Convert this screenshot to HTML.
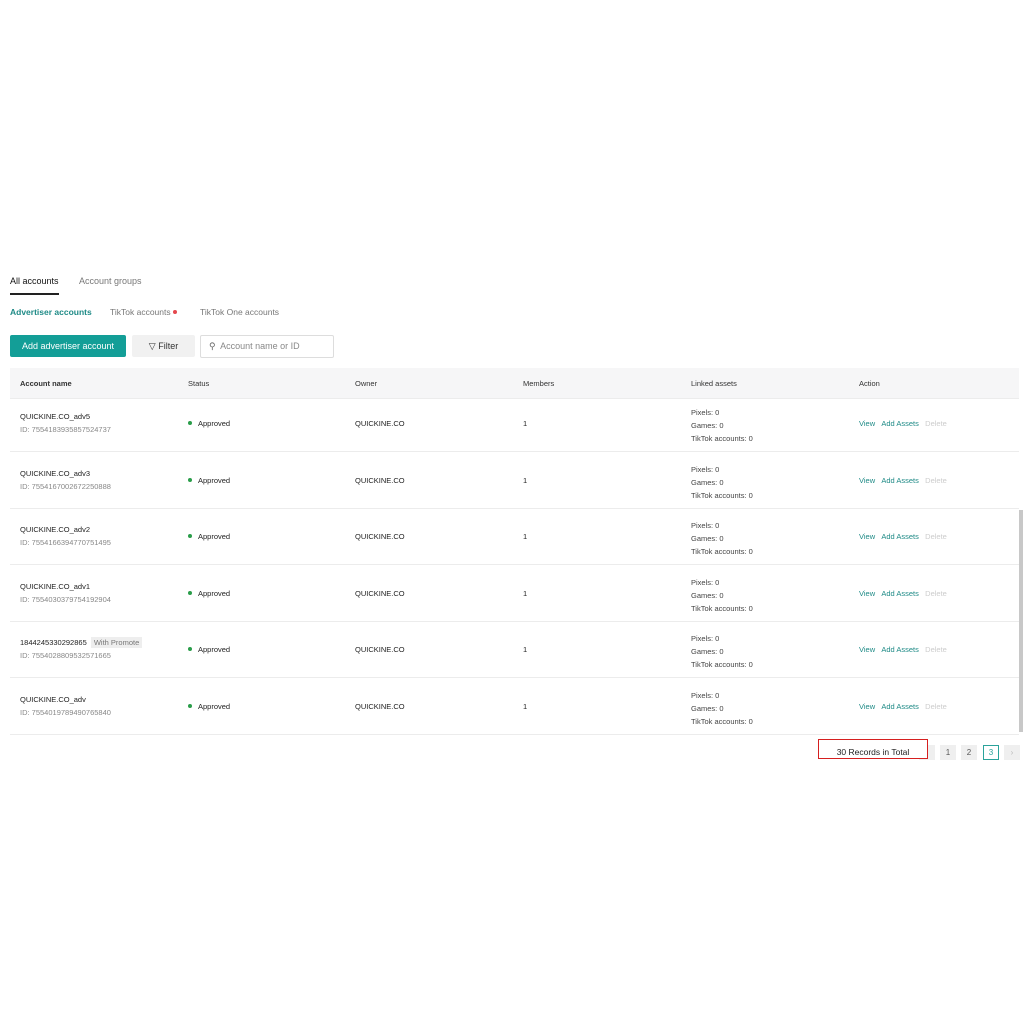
<!DOCTYPE html><html><head><style>
body{margin:0;width:1024px;height:1024px;background:#fff;font-family:"Liberation Sans",sans-serif;color:#222;position:relative;overflow:hidden}
.a{position:absolute;white-space:nowrap}
.s{font-size:7.5px}
.ln{position:absolute;left:10px;width:1009px;height:1px;background:#ececec}
.g{color:#888}
.dot{display:inline-block;width:4px;height:4px;border-radius:50%;background:#2a9d4a;margin-right:6px;vertical-align:1px}
.pb{position:absolute;top:745px;width:16px;height:15px;background:#efefef;font-size:8px;text-align:center;line-height:15px;color:#555}
</style></head><body>
<div class="a" style="left:10px;top:276px;font-size:9px;color:#111">All accounts</div>
<div style="position:absolute;left:10px;top:293px;width:49px;height:2px;background:#222"></div>
<div class="a" style="left:79px;top:276px;font-size:9px;color:#777">Account groups</div>
<div class="a" style="left:10px;top:307px;font-size:8.5px;color:#1e8a86;font-weight:bold">Advertiser accounts</div>
<div class="a" style="left:110px;top:307px;font-size:8.5px;color:#777">TikTok accounts <span style="display:inline-block;width:4px;height:4px;border-radius:50%;background:#e5484d;vertical-align:1px"></span></div>
<div class="a" style="left:200px;top:307px;font-size:8.5px;color:#777">TikTok One accounts</div>
<div class="a" style="left:10px;top:335px;width:116px;height:22px;background:#139e97;border-radius:2px;color:#fff;font-size:9px;line-height:22px;text-align:center">Add advertiser account</div>
<div class="a" style="left:132px;top:335px;width:63px;height:22px;background:#f1f1f1;border-radius:2px;font-size:9px;line-height:22px;text-align:center;color:#333">▽ Filter</div>
<div class="a" style="left:200px;top:335px;width:132px;height:21px;border:1px solid #ddd;border-radius:2px;font-size:9px;line-height:21px;color:#888"><span style="margin-left:8px;color:#666">⚲</span>&nbsp; Account name or ID</div>
<div class="a" style="left:10px;top:368px;width:1009px;height:30px;background:#f6f6f7;border-bottom:1px solid #ececec"></div>
<div class="a s" style="left:20px;top:379px;font-weight:bold;color:#333">Account name</div>
<div class="a s" style="left:188px;top:379px;color:#333">Status</div>
<div class="a s" style="left:355px;top:379px;color:#333">Owner</div>
<div class="a s" style="left:523px;top:379px;color:#333">Members</div>
<div class="a s" style="left:691px;top:379px;color:#333">Linked assets</div>
<div class="a s" style="left:859px;top:379px;color:#333">Action</div>
<div id="rows"></div>
<script>
var d=[["QUICKINE.CO_adv5","7554183935857524737"],["QUICKINE.CO_adv3","7554167002672250888"],["QUICKINE.CO_adv2","7554166394770751495"],["QUICKINE.CO_adv1","7554030379754192904"],["1844245330292865 <span style=\"background:#eee;color:#777;padding:1px 3px;margin-left:2px\">With Promote</span>","7554028809532571665"],["QUICKINE.CO_adv","7554019789490765840"]];
var h="";d.forEach(function(r,i){var c=Math.round(423+i*56.6);
h+='<div class="ln" style="top:'+Math.round(451+i*56.6)+'px"></div>';
h+='<div class="a s" style="left:20px;top:'+(c-11)+'px">'+r[0]+'</div><div class="a s g" style="left:20px;top:'+(c+2)+'px">ID: '+r[1]+'</div>';
h+='<div class="a s" style="left:188px;top:'+(c-4)+'px"><span class="dot"></span>Approved</div>';
h+='<div class="a s" style="left:355px;top:'+(c-4)+'px">QUICKINE.CO</div><div class="a s" style="left:523px;top:'+(c-4)+'px">1</div>';
h+='<div class="a s" style="left:691px;top:'+(c-17)+'px;line-height:13px;color:#444">Pixels: 0<br>Games: 0<br>TikTok accounts: 0</div>';
h+='<div class="a s" style="left:859px;top:'+(c-4)+'px;color:#1e8a86">View &nbsp;&nbsp;Add Assets &nbsp;&nbsp;<span style="color:#ccc">Delete</span></div>';});
document.getElementById("rows").innerHTML=h;
</script>
<div class="a" style="left:1019px;top:510px;width:4px;height:222px;background:#c8c8c8"></div>
<div class="pb" style="left:919px">‹</div>
<div class="pb" style="left:940px">1</div>
<div class="pb" style="left:961px">2</div>
<div class="pb" style="left:983px;background:#fff;border:1px solid #2aa39b;color:#2aa39b;width:14px;height:13px;line-height:13px">3</div>
<div class="pb" style="left:1004px;color:#bbb">›</div>
<div class="a" style="left:818px;top:739px;width:108px;height:18px;border:1.5px solid #d61f1f;border-top-width:1px;background:#fff;font-size:8.5px;text-align:center;line-height:25px;overflow:hidden">30 Records in Total</div>
</body></html>
